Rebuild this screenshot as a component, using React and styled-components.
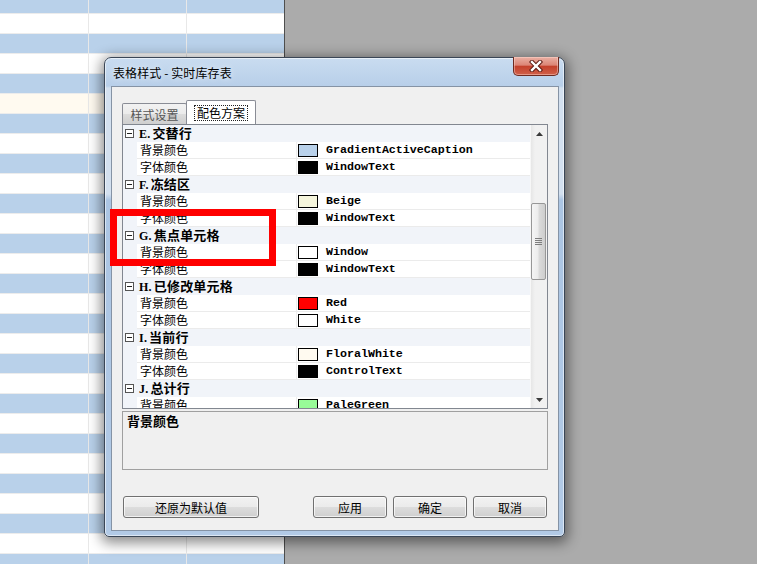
import React from "react";
import styled, { createGlobalStyle } from "styled-components";

const CJK = `"Noto Sans CJK SC", "Microsoft YaHei", sans-serif`;

const GlobalStyle = createGlobalStyle`
  html, body {
    margin: 0;
    padding: 0;
    overflow: hidden;
    background: #ababab;
  }
  * {
    box-sizing: border-box;
  }
`;

const Desktop = styled.div`
  position: relative;
  display: flex;
  width: 757px;
  height: 564px;
  overflow: hidden;
  font-family: ${CJK};
`;

// spreadsheet behind the dialog
const SheetGrid = styled.div`
  width: 285px;
  height: 100%;
  overflow: hidden;
  border-right: 1px solid #4e4e4e;
  background: #ffffff;
`;

const SheetRows = styled.div`
  margin-top: -6px;
`;

const SheetRow = styled.div`
  display: flex;
  height: 20px;
  background: ${(p) => p.$bg};
  border-bottom: 1px solid #ececec;
`;

const SheetCell = styled.div`
  width: ${(p) => p.$w}px;
  height: 100%;
  border-right: ${(p) => (p.$last ? "none" : "1px solid #e8e8e8")};
`;

const GrayArea = styled.div`
  flex: 1;
  background: #ababab;
`;

// dialog window
const Window = styled.div`
  position: absolute;
  left: 104px;
  top: 57px;
  width: 461px;
  height: 480px;
  display: flex;
  flex-direction: column;
  border: 1px solid #3a4656;
  border-radius: 7px 7px 5px 5px;
  background: linear-gradient(
    180deg,
    #c9dcf0 0px,
    #b8cfe9 28px,
    #d3e0ef 30px,
    #d3e0ef 136px,
    #abc5e3 142px,
    #b2cae6 100%
  );
  box-shadow: 0 3px 13px 3px rgba(0, 0, 0, 0.45),
    inset 0 0 0 1px rgba(255, 255, 255, 0.55);
`;

const TitleBar = styled.div`
  height: 28px;
  display: flex;
  align-items: center;
  justify-content: space-between;
  padding-left: 8px;
`;

const Title = styled.div`
  font-size: 12px;
  color: #000;
  text-shadow: 0 0 6px rgba(255, 255, 255, 0.9);
  letter-spacing: 0.1px;
`;

const CloseButton = styled.div`
  align-self: flex-start;
  width: 46px;
  height: 19px;
  margin-right: 5px;
  margin-top: -1px;
  display: flex;
  align-items: center;
  justify-content: center;
  border: 1px solid #6e2a20;
  border-top: none;
  border-radius: 0 0 5px 5px;
  background: linear-gradient(
    180deg,
    #eab0a4 0%,
    #dc8576 45%,
    #c4412c 52%,
    #d06049 100%
  );
  box-shadow: inset 0 0 0 1px rgba(255, 220, 210, 0.45);
`;

const Client = styled.div`
  flex: 1;
  margin: 0 5px 5px 6px;
  padding: 13px 10px 12px 10px;
  display: flex;
  flex-direction: column;
  background: #f0f0f0;
  border: 1px solid #8593a5;
`;

const TabStrip = styled.div`
  display: flex;
  align-items: flex-end;
  height: 24px;
`;

const Tab = styled.div`
  height: ${(p) => (p.$active ? 24 : 21)}px;
  width: ${(p) => (p.$active ? 70 : 65)}px;
  margin-right: -1px;
  display: flex;
  align-items: center;
  justify-content: center;
  font-size: 12px;
  color: ${(p) => (p.$active ? "#000" : "#555")};
  border: 1px solid #898c95;
  border-bottom: none;
  border-radius: 2px 2px 0 0;
  background: ${(p) =>
    p.$active
      ? "#ffffff"
      : "linear-gradient(180deg, #f2f2f2 0%, #ebebeb 50%, #dddddd 50%, #cfcfcf 100%)"};
  position: relative;
  z-index: ${(p) => (p.$active ? 1 : 0)};
`;

const FocusLabel = styled.span`
  padding: 0 2px;
  line-height: 14px;
  outline: 1px dotted #222;
`;

// property grid
const GridBox = styled.div`
  height: 285px;
  display: flex;
  border: 1px solid #828790;
  background: #ffffff;
  overflow: hidden;
`;

const GridRows = styled.div`
  flex: 1;
  overflow: hidden;
`;

const CategoryRow = styled.div`
  height: 17px;
  display: flex;
  align-items: center;
  background: #f1f4f9;
  padding-left: 2px;
`;

const Expander = styled.div`
  width: 9px;
  height: 9px;
  border: 1px solid #555;
  background: #fff;
  display: flex;
  align-items: center;
  justify-content: center;
  margin-right: 5px;

  &:after {
    content: "";
    width: 5px;
    height: 1px;
    background: #222;
  }
`;

const CategoryText = styled.div`
  font-size: 13px;
  font-weight: bold;
  color: #000;
  line-height: 17px;
  letter-spacing: 0.2px;
  white-space: nowrap;
`;

const CategoryKey = styled.span`
  font-family: "Liberation Serif", serif;
  font-size: 12px;
  margin-right: 2px;
`;

const PropRow = styled.div`
  height: 17px;
  display: flex;
  background: #f1f4f9;
`;

const LabelCell = styled.div`
  margin-left: 14px;
  width: 160px;
  padding-left: 3px;
  font-size: 12px;
  line-height: 16px;
  color: #000;
  background: #ffffff;
  border-right: 1px solid #eeeeee;
  border-bottom: 1px solid #ebebeb;
`;

const ValueCell = styled.div`
  flex: 1;
  display: flex;
  align-items: center;
  background: #ffffff;
  border-bottom: 1px solid #ebebeb;
`;

const Swatch = styled.div`
  width: 20px;
  height: 13px;
  margin-left: 1px;
  margin-right: 8px;
  border: 1px solid #000;
  background: ${(p) => p.$color};
`;

const ValueText = styled.span`
  font-family: "Liberation Mono", "DejaVu Sans Mono", monospace;
  font-weight: bold;
  font-size: 11.65px;
  color: #000;
  line-height: 16px;
`;

const ScrollBar = styled.div`
  width: 17px;
  display: flex;
  flex-direction: column;
  background: linear-gradient(90deg, #e6e6e6 0%, #f1f1f1 25%, #f1f1f1 100%);
  border-left: 1px solid #f7f7f7;
`;

const ArrowButton = styled.div`
  height: 17px;
  display: flex;
  align-items: center;
  justify-content: center;
`;

const Track = styled.div`
  flex: 1;
  padding-top: ${(p) => p.$offset}px;
`;

const Thumb = styled.div`
  height: 77px;
  margin: 0 1px 0 0;
  display: flex;
  align-items: center;
  justify-content: center;
  border: 1px solid #979797;
  border-radius: 2px;
  background: linear-gradient(
    90deg,
    #f5f5f5 0%,
    #ececec 45%,
    #dadada 55%,
    #cdcdcd 100%
  );
`;

const DescBox = styled.div`
  margin-top: 2px;
  height: 59px;
  padding: 0 4px;
  border: 1px solid #a0a0a0;
  background: #f0f0f0;
  font-size: 13px;
  font-weight: bold;
  line-height: 18px;
  color: #000;
`;

const ButtonRow = styled.div`
  margin-top: auto;
  display: flex;
  justify-content: space-between;
  padding: 0 1px;
`;

const ButtonGroup = styled.div`
  display: flex;
  gap: 6px;
`;

const Button = styled.button`
  width: ${(p) => p.$w}px;
  height: 22px;
  padding: 0;
  border: 1px solid #707070;
  border-radius: 3px;
  background: linear-gradient(
    180deg,
    #f2f2f2 0%,
    #ebebeb 50%,
    #dddddd 50%,
    #cfcfcf 100%
  );
  box-shadow: inset 0 0 0 1px rgba(255, 255, 255, 0.7);
  font-family: ${CJK};
  font-size: 12px;
  color: #000;
`;

// red annotation drawn on top of the screenshot
const Highlight = styled.div`
  position: absolute;
  left: 110px;
  top: 209px;
  width: 166px;
  height: 57px;
  border: 7px solid #ff0000;
`;

const sheetRows = Array.from({ length: 29 }, (_, i) =>
  i === 5 ? "#fffaf0" : i % 2 === 0 ? "#b9d1ea" : "#ffffff"
);

const sections = [
  { key: "E", name: "交替行", back: ["#b9d1ea", "GradientActiveCaption"], fore: ["#000000", "WindowText"] },
  { key: "F", name: "冻结区", back: ["#f5f5dc", "Beige"], fore: ["#000000", "WindowText"] },
  { key: "G", name: "焦点单元格", back: ["#ffffff", "Window"], fore: ["#000000", "WindowText"] },
  { key: "H", name: "已修改单元格", back: ["#ff0000", "Red"], fore: ["#ffffff", "White"] },
  { key: "I", name: "当前行", back: ["#fffaf0", "FloralWhite"], fore: ["#000000", "ControlText"] },
  { key: "J", name: "总计行", back: ["#98fb98", "PaleGreen"], fore: null },
];

const CloseGlyph = () => (
  <svg width="14" height="12" viewBox="0 0 14 12">
    <path d="M3 2 L11 10 M11 2 L3 10" stroke="#5a1a12" strokeWidth="4.4" strokeLinecap="square" />
    <path d="M3 2 L11 10 M11 2 L3 10" stroke="#ffffff" strokeWidth="2.4" strokeLinecap="square" />
  </svg>
);

const ArrowGlyph = ({ down }) => (
  <svg width="7" height="4" viewBox="0 0 7 4">
    <polygon points={down ? "0,0 7,0 3.5,4" : "0,4 7,4 3.5,0"} fill="#3a3a3a" />
  </svg>
);

const Grip = () => (
  <svg width="7" height="8" viewBox="0 0 7 8">
    {[0, 2, 4, 6].map((y) => (
      <rect key={y} x="0" y={y} width="7" height="1" fill="#7d7d7d" />
    ))}
  </svg>
);

const PropLine = ({ label, value }) => (
  <PropRow>
    <LabelCell>{label}</LabelCell>
    <ValueCell>
      <Swatch $color={value[0]} />
      <ValueText>{value[1]}</ValueText>
    </ValueCell>
  </PropRow>
);

const App = () => {
  return (
    <Desktop>
      <GlobalStyle />
      <SheetGrid>
        <SheetRows>
          {sheetRows.map((bg, i) => (
            <SheetRow key={i} $bg={bg}>
              <SheetCell $w={89} />
              <SheetCell $w={98} />
              <SheetCell $w={97} $last />
            </SheetRow>
          ))}
        </SheetRows>
      </SheetGrid>
      <GrayArea />

      <Window>
        <TitleBar>
          <Title>表格样式 - 实时库存表</Title>
          <CloseButton>
            <CloseGlyph />
          </CloseButton>
        </TitleBar>
        <Client>
          <TabStrip>
            <Tab>样式设置</Tab>
            <Tab $active>
              <FocusLabel>配色方案</FocusLabel>
            </Tab>
          </TabStrip>
          <GridBox>
            <GridRows>
              {sections.map((s) => (
                <React.Fragment key={s.key}>
                  <CategoryRow>
                    <Expander />
                    <CategoryText>
                      <CategoryKey>{s.key}.</CategoryKey>
                      {s.name}
                    </CategoryText>
                  </CategoryRow>
                  <PropLine label="背景颜色" value={s.back} />
                  {s.fore && <PropLine label="字体颜色" value={s.fore} />}
                </React.Fragment>
              ))}
            </GridRows>
            <ScrollBar>
              <ArrowButton>
                <ArrowGlyph />
              </ArrowButton>
              <Track $offset={61}>
                <Thumb>
                  <Grip />
                </Thumb>
              </Track>
              <ArrowButton>
                <ArrowGlyph down />
              </ArrowButton>
            </ScrollBar>
          </GridBox>
          <DescBox>背景颜色</DescBox>
          <ButtonRow>
            <Button $w={136}>还原为默认值</Button>
            <ButtonGroup>
              <Button $w={74}>应用</Button>
              <Button $w={74}>确定</Button>
              <Button $w={74}>取消</Button>
            </ButtonGroup>
          </ButtonRow>
        </Client>
      </Window>

      <Highlight />
    </Desktop>
  );
};

export default App;
